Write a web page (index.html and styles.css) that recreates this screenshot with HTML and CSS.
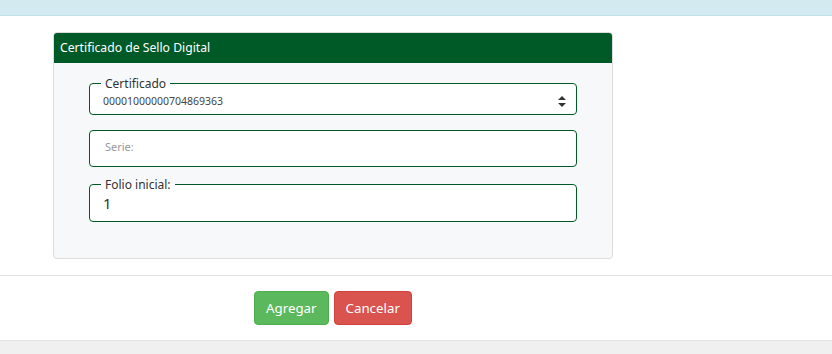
FILE: index.html
```html
<!DOCTYPE html>
<html lang="es">
<head>
  <meta charset="UTF-8" />
  <title>Certificado de Sello Digital</title>
  <link rel="stylesheet" href="styles.css">
</head>
<body>
  <div class="topbar"></div>
  <div class="content">
    <div class="card">
      <div class="card-header">Certificado de Sello Digital</div>
      <div class="card-body">
        <fieldset class="field">
          <legend>Certificado</legend>
          <div class="select-value">
            <span>00001000000704869363</span>
            <svg class="caret" width="8" height="11" viewBox="0 0 8 11"><path d="M4 0 L8 4 L0 4 Z M0 7 L8 7 L4 11 Z" fill="#333"/></svg>
          </div>
        </fieldset>
        <div class="input-box"><span class="placeholder">Serie:</span></div>
        <fieldset class="field last">
          <legend>Folio inicial:</legend>
          <div class="folio-value">1</div>
        </fieldset>
      </div>
    </div>
  </div>
  <div class="actions">
    <button class="btn btn-success">Agregar</button>
    <button class="btn btn-danger">Cancelar</button>
  </div>
  <div class="footer"></div>
</body>
</html>
```
FILE: styles.css
```css
body { margin: 0; font-family: "Noto Sans", "Open Sans", sans-serif; color: #333; background: #fff; }
.topbar { height: 15px; background: #d2eaf0; border-bottom: 1px solid #c3e1e8; }
.content { padding: 16px 0 16px 53px; }
.card { width: 558px; border: 1px solid #dcdcdc; border-radius: 4px; background: #f7f8fa; overflow: hidden; }
.card-header { background: #005a28; color: #fff; font-size: 12.2px; height: 30px; line-height: 30px; padding-left: 6px; }
.card-body { padding: 14px 35px 36px 35px; }
.field { margin: 0 0 15px 0; padding: 0 12px 0 13px; border: 1px solid #005a28; border-radius: 4px; background: #fff; }
.field.last { margin-bottom: 0; }
.field legend { padding: 0 4px; margin-left: -2px; font-size: 12px; line-height: 13px; color: #333; }
.select-value { display: flex; align-items: center; justify-content: space-between; height: 22px; font-size: 10.5px; color: #444; padding-bottom: 2px; }
.caret { margin-right: -2px; }
.input-box { border: 1px solid #005a28; border-radius: 4px; background: #fff; margin-bottom: 11px; display: flex; align-items: center; padding: 0 0 4px 15px; box-sizing: border-box; height: 37px; }
.placeholder { font-size: 11px; color: #999; }
.folio-value { font-size: 15px; height: 30px; line-height: 24px; color: #333; }
.actions { border-top: 1px solid #e3e3e3; border-bottom: 1px solid #e3e3e3; height: 64px; display: flex; align-items: center; padding-left: 254px; gap: 5px; }
.btn { font-family: inherit; font-size: 13.3px; color: #fff; border-radius: 4px; height: 34px; padding: 0 11px; border: 1px solid; cursor: pointer; }
.btn-success { background: #5cb85c; border-color: #4cae4c; }
.btn-danger { background: #d9534f; border-color: #d43f3a; }
.footer { height: 14px; background: #f0f0f0; }
```
